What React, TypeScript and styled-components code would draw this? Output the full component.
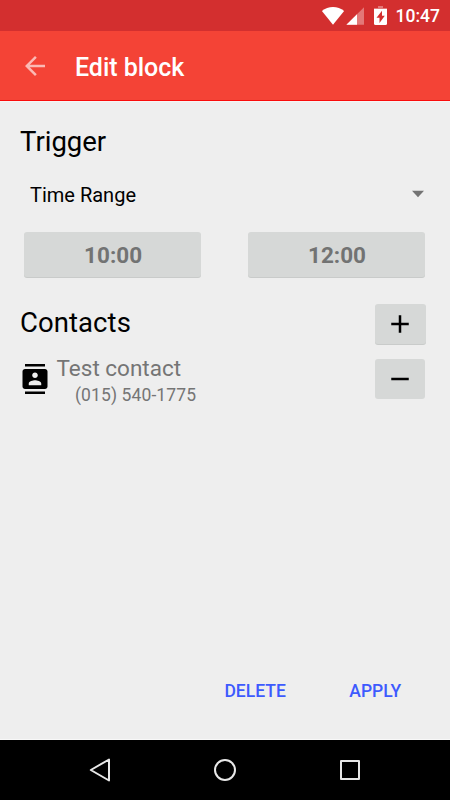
import React from 'react';
import styled, { createGlobalStyle } from 'styled-components';

const GlobalStyle = createGlobalStyle`
  html, body { margin: 0; padding: 0; }
  body { width: 450px; height: 800px; overflow: hidden; background: #eeeeee; }
  * { box-sizing: border-box; }
`;

const Screen = styled.div`
  display: flex;
  flex-direction: column;
  width: 450px;
  height: 800px;
  background: #eeeeee;
  color: #000;
  font-family: Roboto, sans-serif;
`;

const StatusBar = styled.header`
  display: flex;
  align-items: center;
  justify-content: flex-end;
  height: 31px;
  padding: 0 10px 0 0;
  background: #d32f2f;
`;

const StatusIcons = styled.svg`
  width: 70px;
  height: 31px;
  margin-right: 5px;
`;

const Clock = styled.time`
  font-size: 17.5px;
  font-weight: 500;
  line-height: 31px;
  padding-top: 2px;
  color: #fff;
`;

const Toolbar = styled.div`
  display: flex;
  align-items: center;
  height: 70px;
  padding-left: 20px;
  background: #f44336;
  border-bottom: 1px solid #f90b0b;
`;

const BackButton = styled.button`
  width: 30px;
  height: 30px;
  padding: 0;
  border: 0;
  background: none;
  color: #fbb9b4;
`;

const Icon = styled.svg`
  display: block;
  width: 30px;
  height: 30px;
  fill: currentColor;
`;

const Title = styled.h1`
  margin: 5px 0 0 25px;
  font-size: 25px;
  font-weight: 500;
  line-height: 30px;
  letter-spacing: -0.04px;
  color: #fff;
`;

const Content = styled.main`
  display: flex;
  flex-direction: column;
  flex: 1;
  padding: 20px 24.5px 0 20px;
  border-top: 1px solid #f6f4f4;
`;

const Heading = styled.h2`
  margin: 0;
  font-size: 27.5px;
  font-weight: 400;
  line-height: 40px;
`;

const Spinner = styled.div`
  display: flex;
  align-items: center;
  justify-content: space-between;
  height: 40px;
  margin-top: 13px;
  padding: 0 2px 0 10px;
  font-size: 20px;
`;

const Caret = styled.svg`
  width: 12px;
  height: 8px;
  margin-top: -2px;
`;

const TimeRow = styled.div`
  display: flex;
  justify-content: space-between;
  margin-top: 16.5px;
  padding: 0 0.3px 0 4.3px;
`;

const GrayButton = styled.button<{ $width: number; $height: number; $flat?: boolean }>`
  display: flex;
  align-items: center;
  justify-content: center;
  flex: none;
  width: ${(p) => p.$width}px;
  height: ${(p) => p.$height}px;
  padding: 0;
  border: 0;
  border-radius: 3px;
  background: #d6d8d7;
  box-shadow: ${(p) => (p.$flat ? 'none' : '0 1px 0 #c9cbca')};
  color: #000;
`;

const TimeLabel = styled.span`
  font-family: Roboto, sans-serif;
  font-size: 22.5px;
  font-weight: 700;
  line-height: 28px;
  padding: 1.5px 0 0 0.6px;
  color: #727373;
`;

const ContactsHeader = styled.div`
  display: flex;
  justify-content: space-between;
  margin-top: 26.5px;
  height: 40px;
`;

const ContactsHeading = styled(Heading)`
  margin-top: -1px;
  letter-spacing: 0.08px;
`;

const ContactRow = styled.div`
  display: flex;
  margin-top: 15px;
  height: 50px;
  padding-right: 0.5px;
`;

const ContactIcon = styled(Icon)`
  margin-top: 5px;
`;

const ContactText = styled.div`
  flex: 1;
  padding-left: 6.5px;
  color: #757575;
`;

const ContactName = styled.div`
  margin-top: -5px;
  font-size: 22.5px;
  line-height: 28px;
`;

const ContactPhone = styled.div`
  padding: 1px 0 0 18.5px;
  font-size: 17.5px;
  line-height: 24px;
  letter-spacing: 0.11px;
`;

const Actions = styled.footer`
  display: flex;
  justify-content: flex-end;
  gap: 63.5px;
  height: 70px;
  padding: 1px 48.8px 0 0;
  border-bottom: 1px solid #f8f8f8;
`;

const TextButton = styled.button`
  height: 40px;
  padding: 0;
  border: 0;
  background: none;
  color: #3d5afe;
  font: 500 17.5px/40px Roboto, sans-serif;
`;

const NavBar = styled.nav`
  display: flex;
  align-items: center;
  justify-content: center;
  gap: 95px;
  height: 60px;
  background: #000;
`;

const NavIcon = styled(Icon)`
  fill: none;
  stroke: #e8e8e8;
  stroke-width: 2;
  stroke-linejoin: round;
`;

export default function App() {
  return (
    <Screen>
      <GlobalStyle />
      <StatusBar>
        <StatusIcons viewBox="321 0 70 31">
          <path fill="#fff" d="M333 24.7 321.9 10.9C325 8.3 329 6.9 333 6.9s8 1.4 11.1 4z" />
          <path fill="#e37878" d="M364 7.2v17.6h-17.6z" />
          <path fill="#fff" d="M357 14.2v10.6h-10.6z" />
          <path fill="#e37878" d="M378 6h5v2h4v2h-13V8h4z" />
          <path fill="#fff" d="M374 9h13v14.5q0 1.5-1.5 1.5h-10q-1.5 0-1.5-1.5z" />
          <path fill="#d32f2f" d="M382 10.8v5h2.8l-5.3 7.2v-5.3h-3z" />
        </StatusIcons>
        <Clock>10:47</Clock>
      </StatusBar>
      <Toolbar>
        <BackButton aria-label="Back">
          <Icon viewBox="0 0 24 24">
            <path d="M20 11H7.83l5.59-5.59L12 4l-8 8 8 8 1.41-1.41L7.83 13H20z" />
          </Icon>
        </BackButton>
        <Title>Edit block</Title>
      </Toolbar>
      <Content>
        <Heading>Trigger</Heading>
        <Spinner>
          <span>Time Range</span>
          <Caret viewBox="0 0 12 8">
            <path fill="#737373" d="M0 .7h12L6 7.3z" />
          </Caret>
        </Spinner>
        <TimeRow>
          <GrayButton $width={177} $height={45.5}>
            <TimeLabel>10:00</TimeLabel>
          </GrayButton>
          <GrayButton $width={177} $height={45.5}>
            <TimeLabel>12:00</TimeLabel>
          </GrayButton>
        </TimeRow>
        <ContactsHeader>
          <ContactsHeading>Contacts</ContactsHeading>
          <GrayButton $width={50.5} $height={40} aria-label="Add contact">
            <Icon viewBox="0 0 24 24">
              <path d="M19 13h-6v6h-2v-6H5v-2h6V5h2v6h6z" />
            </Icon>
          </GrayButton>
        </ContactsHeader>
        <ContactRow>
          <ContactIcon viewBox="0 0 24 24">
            <path d="M20 0H4v2h16V0zM4 24h16v-2H4v2zM20 4H4c-1.1 0-2 .9-2 2v12c0 1.1.9 2 2 2h16c1.1 0 2-.9 2-2V6c0-1.1-.9-2-2-2zm-8 2.75c1.24 0 2.25 1.01 2.25 2.25s-1.01 2.25-2.25 2.25S9.75 10.24 9.75 9 10.76 6.75 12 6.75zM17 17H7v-1.5c0-1.67 3.33-2.5 5-2.5s5 .83 5 2.5V17z" />
          </ContactIcon>
          <ContactText>
            <ContactName>Test contact</ContactName>
            <ContactPhone>(015) 540-1775</ContactPhone>
          </ContactText>
          <GrayButton $width={50} $height={40} $flat aria-label="Remove contact">
            <Icon viewBox="0 0 24 24">
              <path d="M19 13H5v-2h14z" />
            </Icon>
          </GrayButton>
        </ContactRow>
      </Content>
      <Actions>
        <TextButton>DELETE</TextButton>
        <TextButton>APPLY</TextButton>
      </Actions>
      <NavBar>
        <NavIcon viewBox="85 755 30 30">
          <path d="M109 759.5v21L90.8 770z" />
        </NavIcon>
        <NavIcon viewBox="210 755 30 30">
          <circle cx="225" cy="770" r="10" />
        </NavIcon>
        <NavIcon viewBox="335 755 30 30">
          <path d="M341 761h18v18h-18z" />
        </NavIcon>
      </NavBar>
    </Screen>
  );
}
